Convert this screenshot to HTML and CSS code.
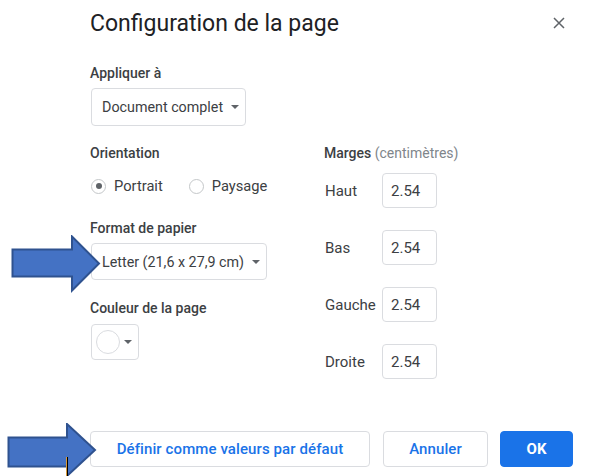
FILE: index.html
```html
<!DOCTYPE html>
<html lang="fr">
<head>
<meta charset="utf-8">
<title>Configuration de la page</title>
<link rel="stylesheet" href="styles.css">
</head>
<body>
<div class="dialog">
  <div class="header">
    <h1 class="title">Configuration de la page</h1>
    <button class="close" aria-label="Fermer">
      <svg width="12" height="12" viewBox="0 0 12 12"><path d="M1 1L11 11M11 1L1 11" stroke="#5f6368" stroke-width="1.5" fill="none"/></svg>
    </button>
  </div>

  <div class="label apply-label">Appliquer à</div>
  <div class="select select-doc"><span>Document complet</span><i class="caret"></i></div>

  <div class="cols">
    <div class="col-left">
      <div class="label">Orientation</div>
      <div class="radios">
        <label class="radio"><span class="dot checked"></span>Portrait</label>
        <label class="radio"><span class="dot"></span>Paysage</label>
      </div>
      <div class="label paper-label">Format de papier</div>
      <div class="select select-paper"><span>Letter (21,6 x 27,9 cm)</span><i class="caret"></i></div>
      <div class="label color-label">Couleur de la page</div>
      <div class="color-btn"><span class="swatch"></span><i class="caret"></i></div>
    </div>
    <div class="col-right">
      <div class="label">Marges <span class="unit">(centimètres)</span></div>
      <div class="margin-row"><span class="m-label">Haut</span><span class="m-input">2.54</span></div>
      <div class="margin-row"><span class="m-label">Bas</span><span class="m-input">2.54</span></div>
      <div class="margin-row"><span class="m-label">Gauche</span><span class="m-input">2.54</span></div>
      <div class="margin-row"><span class="m-label">Droite</span><span class="m-input">2.54</span></div>
    </div>
  </div>

  <div class="footer">
    <button class="btn btn-default">Définir comme valeurs par défaut</button>
    <button class="btn btn-cancel">Annuler</button>
    <button class="btn btn-ok">OK</button>
  </div>
</div>

<svg class="arrow arrow-1" width="92" height="60" viewBox="0 0 92 60">
  <polygon points="1.5,14.5 61,14.5 61,1.5 88,28.5 61,55.5 61,41.5 1.5,41.5" fill="#4472c4" stroke="#2f528f" stroke-width="2"/>
</svg>
<svg class="arrow arrow-2" width="92" height="58" viewBox="0 0 92 58">
  <polygon points="1.5,14.5 60,14.5 60,1 88,27 60,53 60,43.5 1.5,43.5" fill="#4472c4" stroke="#2f528f" stroke-width="2"/>
</svg>
<span class="cursor-mark"></span>
</body>
</html>
```

FILE: styles.css
```css
* { box-sizing: border-box; }

body {
  margin: 0;
  background: #ffffff;
  font-family: Roboto, "Liberation Sans", Arial, sans-serif;
  color: #3c4043;
  width: 613px;
  height: 476px;
  overflow: hidden;
  position: relative;
}

.dialog {
  padding: 8px 0 0 90px;
  width: 613px;
}

.header {
  display: flex;
  justify-content: space-between;
  align-items: center;
  padding-right: 48px;
  height: 32px;
}

.title {
  margin: 0;
  font-size: 23px;
  line-height: 32px;
  font-weight: 400;
  color: #202124;
}

.close {
  border: 0;
  background: none;
  padding: 0;
  width: 12px;
  height: 12px;
  display: flex;
  margin-top: -2px;
}

.label {
  font-size: 14px;
  line-height: 20px;
  font-weight: 500;
  color: #3c4043;
}

.apply-label { margin-top: 23px; }

.unit {
  font-weight: 400;
  color: #80868b;
}

.select {
  display: inline-flex;
  align-items: center;
  gap: 8px;
  border: 1px solid #dadce0;
  border-radius: 4px;
  padding: 0 6px 0 10px;
  font-size: 14.3px;
  color: #3c4043;
  background: #fff;
  white-space: nowrap;
  margin-left: 1px;
}

.select-doc {
  margin-top: 5px;
  height: 38px;
}

.select-paper {
  margin-top: 5px;
  height: 37px;
}

.caret {
  display: inline-block;
  width: 0;
  height: 0;
  border-left: 4px solid transparent;
  border-right: 4px solid transparent;
  border-top: 4px solid #5f6368;
}

.cols {
  display: grid;
  grid-template-columns: 234px 1fr;
  margin-top: 17px;
}

.radios {
  display: flex;
  margin-top: 13px;
  height: 20px;
  align-items: center;
}

.radio {
  display: flex;
  align-items: center;
  font-size: 14.7px;
  color: #3c4043;
}

.radio + .radio { margin-left: 25px; }

.dot {
  width: 15px;
  height: 15px;
  border: 1px solid #c4c7c9;
  border-radius: 50%;
  margin: 0 8px 0 1px;
  position: relative;
  display: inline-block;
}

.dot.checked::after {
  content: "";
  position: absolute;
  left: 3.5px;
  top: 3.5px;
  width: 6px;
  height: 6px;
  border-radius: 50%;
  background: #5f6368;
}

.paper-label { margin-top: 22px; }
.color-label { margin-top: 18px; }

.color-btn {
  margin-top: 6px;
  margin-left: 1px;
  width: 48px;
  height: 36px;
  border: 1px solid #dadce0;
  border-radius: 4px;
  display: flex;
  align-items: center;
  padding-left: 4px;
  gap: 4px;
}

.swatch {
  width: 24px;
  height: 24px;
  border: 1px solid #dadce0;
  border-radius: 50%;
  background: #fff;
}

.margin-row {
  display: flex;
  align-items: center;
  margin-top: 22px;
}

.label + .margin-row { margin-top: 10px; }

.m-label {
  width: 58px;
  font-size: 15px;
  padding-left: 1px;
  color: #3c4043;
}

.m-input {
  width: 55px;
  height: 35px;
  border: 1px solid #dadce0;
  border-radius: 4px;
  display: flex;
  align-items: center;
  padding-left: 8px;
  font-size: 15px;
  color: #3c4043;
}

.footer {
  display: flex;
  margin-top: 52px;
}

.btn {
  height: 36px;
  border-radius: 4px;
  font-family: Roboto, "Liberation Sans", Arial, sans-serif;
  font-size: 15px;
  font-weight: 500;
  letter-spacing: 0.1px;
  padding: 0;
  background: #fff;
  border: 1px solid #dadce0;
  color: #1a73e8;
}

.btn-default { width: 280px; }
.btn-cancel { width: 105px; margin-left: 13px; }
.btn-ok {
  width: 73px;
  margin-left: 12px;
  background: #1a73e8;
  border-color: #1a73e8;
  color: #fff;
  font-weight: 700;
}

.arrow { position: absolute; }
.arrow-1 { left: 11px; top: 235px; }
.arrow-2 { left: 7px; top: 423px; }

.cursor-mark {
  position: absolute;
  left: 66px;
  top: 457px;
  width: 2px;
  height: 19px;
  background: #000;
  border-left: 1px solid #d89a3a;
}
```
